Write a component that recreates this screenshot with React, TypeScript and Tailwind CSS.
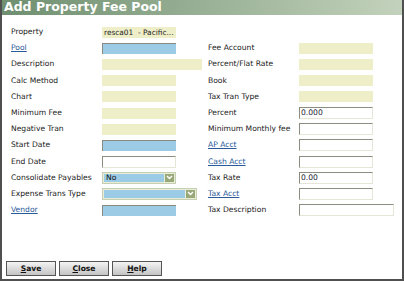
import React from 'react';

type Field =
    | { kind: 'ro'; w?: string; value?: string }
    | { kind: 'blue'; w?: string }
    | { kind: 'text'; w?: string; value?: string }
    | { kind: 'select'; w: string; value?: string };

type Row = { label: string; link?: boolean; field: Field } | null;

const leftRows: Row[] = [
    { label: 'Property', field: { kind: 'ro', value: 'resca01  - Pacific...' } },
    { label: 'Pool', link: true, field: { kind: 'blue' } },
    { label: 'Description', field: { kind: 'ro', w: 'w-[100px]' } },
    { label: 'Calc Method', field: { kind: 'ro' } },
    { label: 'Chart', field: { kind: 'ro' } },
    { label: 'Minimum Fee', field: { kind: 'ro' } },
    { label: 'Negative Tran', field: { kind: 'ro' } },
    { label: 'Start Date', field: { kind: 'blue' } },
    { label: 'End Date', field: { kind: 'text' } },
    { label: 'Consolidate Payables', field: { kind: 'select', w: 'w-[74px]', value: 'No' } },
    { label: 'Expense Trans Type', field: { kind: 'select', w: 'w-[95px]' } },
    { label: 'Vendor', link: true, field: { kind: 'blue' } },
];

const rightRows: Row[] = [
    null,
    { label: 'Fee Account', field: { kind: 'ro' } },
    { label: 'Percent/Flat Rate', field: { kind: 'ro' } },
    { label: 'Book', field: { kind: 'ro' } },
    { label: 'Tax Tran Type', field: { kind: 'ro' } },
    { label: 'Percent', field: { kind: 'text', value: '0.000' } },
    { label: 'Minimum Monthly fee', field: { kind: 'text' } },
    { label: 'AP Acct', link: true, field: { kind: 'text' } },
    { label: 'Cash Acct', link: true, field: { kind: 'text' } },
    { label: 'Tax Rate', field: { kind: 'text', value: '0.00' } },
    { label: 'Tax Acct', link: true, field: { kind: 'text' } },
    { label: 'Tax Description', field: { kind: 'text', w: 'w-[95px]' } },
];

const FieldBox: React.FC<{ field: Field }> = ({ field }) => {
    const w = field.w ?? 'w-[74px]';
    if (field.kind === 'ro') {
        return (
            <div className={`${w} h-[11px] bg-[#eeeec9] text-[7.4px] leading-[11px] pl-[2px] text-[#222] whitespace-pre`}>
                {field.value}
            </div>
        );
    }
    if (field.kind === 'blue') {
        return <div className={`${w} h-[11px] bg-[#9ccbe6] border-t-[1px] border-l-[1px] border-[#8a8a80]`} />;
    }
    if (field.kind === 'text') {
        return (
            <div className={`${w} h-[12px] bg-white border-t-[1px] border-l-[1px] border-[#8c8c80] border-r border-b border-r-[#e6e6d8] border-b-[#e6e6d8] text-[7.6px] leading-[10px] pl-[1px] text-[#223]`}>
                {field.value}
            </div>
        );
    }
    return (
        <div className={`${w} h-[12px] flex border border-[#c6d0b0] bg-[#e8ecd8] p-[1px] gap-[1px]`}>
            <div className="flex-1 bg-[#9ccbe6] text-[7.6px] leading-[8px] pl-[2px] text-[#111]">{field.value}</div>
            <div className="w-[9px] bg-[#98a878] flex items-center justify-center">
                <svg width="7" height="5" viewBox="0 0 7 5">
                    <path d="M1 1 L3.5 3.5 L6 1" stroke="white" strokeWidth="1.4" fill="none" />
                </svg>
            </div>
        </div>
    );
};

const FormColumn: React.FC<{ rows: Row[] }> = ({ rows }) => (
    <div className="flex flex-col">
        {rows.map((row, idx) => (
            <div key={idx} className="h-[16.2px] flex items-center">
                {row && (
                    <>
                        <span className={`w-[91px] text-[7.6px] leading-[10px] ${row.link ? 'text-[#2a5a9a] underline' : 'text-[#222]'}`}>
                            {row.label}
                        </span>
                        <FieldBox field={row.field} />
                    </>
                )}
            </div>
        ))}
    </div>
);

const Button: React.FC<{ first: string; rest: string; w: string }> = ({ first, rest, w }) => (
    <div className={`${w} h-[15px] border border-[#555] bg-gradient-to-b from-[#f4f4f4] to-[#c4c4c4] flex items-center justify-center text-[7.6px] font-bold text-[#111]`}>
        <span className="underline">{first}</span>
        {rest}
    </div>
);

const App: React.FC = () => {
    return (
        <div className="w-[404px] h-[281px] bg-white font-['DejaVu_Sans',sans-serif] flex flex-col border-l-[2px] border-r-[2px] border-b-[2px] border-[#505050]">
            <div className="h-[15px] bg-gradient-to-r from-[#6f8f70] to-[#c3d2bc] flex items-center pl-[2px]">
                <span className="text-white font-bold text-[12.5px] leading-none">Add Property Fee Pool</span>
            </div>
            <div className="flex pl-[9px] pt-[9px]">
                <div className="w-[197px]">
                    <FormColumn rows={leftRows} />
                </div>
                <div className="flex-1">
                    <FormColumn rows={rightRows} />
                </div>
            </div>
            <div className="flex-1" />
            <div className="flex gap-[3px] pl-[4px] pb-[3px]">
                <Button first="S" rest="ave" w="w-[50px]" />
                <Button first="C" rest="lose" w="w-[50px]" />
                <Button first="H" rest="elp" w="w-[50px]" />
            </div>
        </div>
    );
};

export default App;
